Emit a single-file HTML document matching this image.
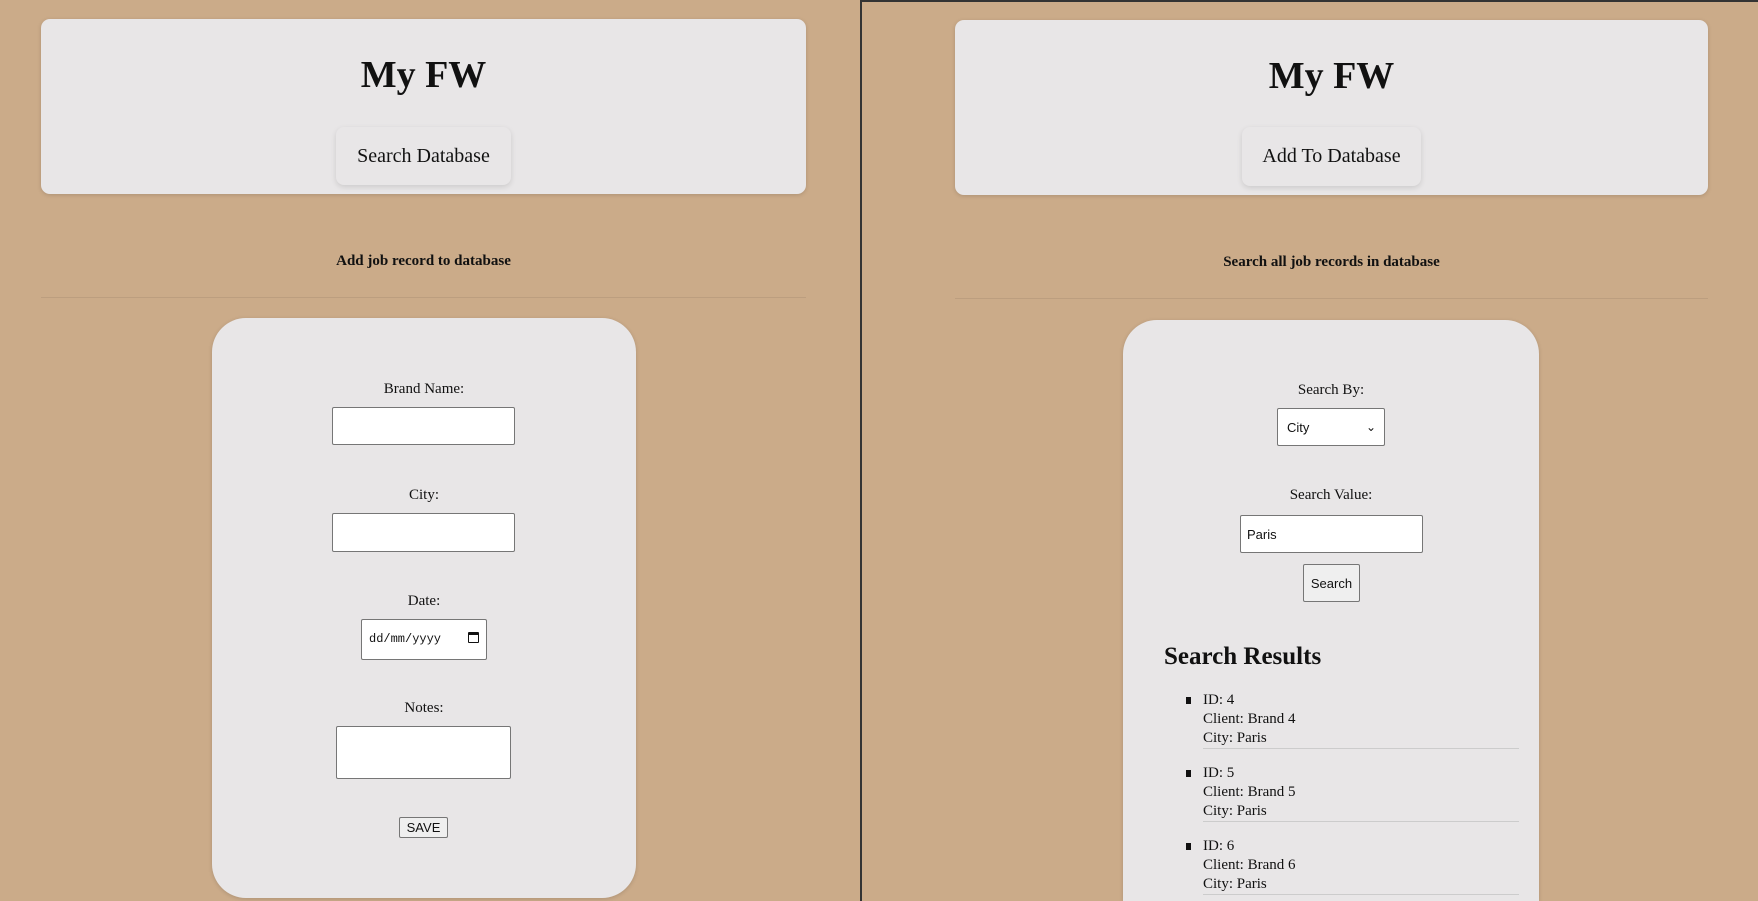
<!DOCTYPE html>
<html><head><meta charset="utf-8"><style>
*{box-sizing:border-box;margin:0;padding:0}
html,body{width:1758px;height:901px;overflow:hidden}
body{background:#cbab89;font-family:"Liberation Serif",serif;color:#111;position:relative}
.a{position:absolute}
.card{background:#e8e6e7;border-radius:9px;box-shadow:0 1px 4px rgba(0,0,0,.15)}
.title{font-weight:bold;font-size:38px;text-align:center;width:100%}
.btn{background:#e8e6e7;border-radius:8px;box-shadow:0 2px 6px rgba(0,0,0,.12);font-size:20px;display:flex;align-items:center;justify-content:center}
.sub{font-weight:bold;font-size:15px;text-align:center}
.line{height:1px;background:rgba(0,0,0,.07)}
.lbl{font-size:15px;text-align:center}
.inp{background:#fff;border:1px solid #767676;border-radius:2px;font-family:"Liberation Sans",sans-serif;font-size:13px}
.fbtn{background:#efefef;border:1px solid #767676;border-radius:2px;font-family:"Liberation Sans",sans-serif;font-size:13px;display:flex;align-items:center;justify-content:center}
.li{font-size:15px;line-height:19px}
</style></head><body>
<div class="a" style="left:860px;top:0;width:2px;height:901px;background:#333"></div>
<div class="a" style="left:862px;top:0;width:896px;height:2px;background:#333"></div>

<!-- left -->
<div class="a card" style="left:41px;top:19px;width:765px;height:175px"></div>
<div class="a title" style="left:41px;width:765px;top:53px">My FW</div>
<div class="a btn" style="left:336px;top:127px;width:175px;height:58px">Search Database</div>
<div class="a sub" style="left:41px;width:765px;top:253px">Add job record to database</div>
<div class="a line" style="left:41px;width:765px;top:297px"></div>
<div class="a card" style="left:212px;top:318px;width:424px;height:580px;border-radius:34px"></div>
<div class="a lbl" style="left:212px;width:424px;top:381px">Brand Name:</div>
<div class="a inp" style="left:332px;top:407px;width:183px;height:38px"></div>
<div class="a lbl" style="left:212px;width:424px;top:487px">City:</div>
<div class="a inp" style="left:332px;top:513px;width:183px;height:39px"></div>
<div class="a lbl" style="left:212px;width:424px;top:593px">Date:</div>
<div class="a inp" style="left:361px;top:619px;width:126px;height:41px;font-family:'Liberation Mono',monospace;font-size:12px;padding:12px 0 0 7px">dd/mm/yyyy<span style="position:absolute;right:7px;top:12px;width:11px;height:11px;border:1.5px solid #111;border-top-width:3px;border-radius:1px"></span></div>
<div class="a lbl" style="left:212px;width:424px;top:700px">Notes:</div>
<div class="a inp" style="left:336px;top:726px;width:175px;height:53px"></div>
<div class="a fbtn" style="left:399px;top:817px;width:49px;height:21px">SAVE</div>

<!-- right -->
<div class="a card" style="left:955px;top:20px;width:753px;height:175px"></div>
<div class="a title" style="left:955px;width:753px;top:54px">My FW</div>
<div class="a btn" style="left:1242px;top:127px;width:179px;height:59px">Add To Database</div>
<div class="a sub" style="left:955px;width:753px;top:254px">Search all job records in database</div>
<div class="a line" style="left:955px;width:753px;top:298px"></div>
<div class="a card" style="left:1123px;top:320px;width:416px;height:581px;border-radius:34px 34px 0 0"></div>
<div class="a lbl" style="left:1123px;width:416px;top:382px">Search By:</div>
<div class="a inp" style="left:1277px;top:408px;width:108px;height:38px;padding:11px 0 0 9px">City<span style="position:absolute;right:8px;top:11px;font-size:12px">&#8964;</span></div>
<div class="a lbl" style="left:1123px;width:416px;top:487px">Search Value:</div>
<div class="a inp" style="left:1240px;top:515px;width:183px;height:38px;padding:11px 0 0 6px">Paris</div>
<div class="a fbtn" style="left:1303px;top:564px;width:57px;height:38px">Search</div>
<div class="a" style="left:1164px;top:643px;font-size:25px;font-weight:bold">Search Results</div>

<div class="a li" style="left:1203px;top:691px">ID: 4<br>Client: Brand 4<br>City: Paris</div>
<div class="a" style="left:1186px;top:697px;width:5px;height:7px;background:#111"></div>
<div class="a line" style="left:1203px;width:316px;top:748px;background:#ccc"></div>
<div class="a li" style="left:1203px;top:764px">ID: 5<br>Client: Brand 5<br>City: Paris</div>
<div class="a" style="left:1186px;top:770px;width:5px;height:7px;background:#111"></div>
<div class="a line" style="left:1203px;width:316px;top:821px;background:#ccc"></div>
<div class="a li" style="left:1203px;top:837px">ID: 6<br>Client: Brand 6<br>City: Paris</div>
<div class="a" style="left:1186px;top:843px;width:5px;height:7px;background:#111"></div>
<div class="a line" style="left:1203px;width:316px;top:894px;background:#ccc"></div>
</body></html>
